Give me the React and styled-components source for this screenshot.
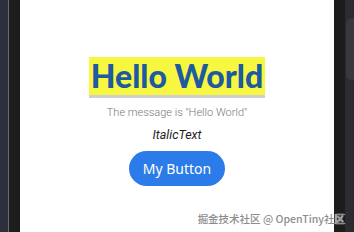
import styled, { createGlobalStyle } from "styled-components";

const GlobalStyle = createGlobalStyle`
  html, body {
    margin: 0;
    padding: 0;
    width: 100%;
    height: 100%;
    overflow: hidden;
    background: #1c1d1c;
  }
  #root {
    height: 100%;
  }
`;

const Device = styled.div`
  position: relative;
  display: flex;
  width: 354px;
  height: 232px;
  font-family: Roboto, "Noto Sans", sans-serif;
`;

const LeftBezel = styled.div`
  display: flex;
  width: 20px;
  flex-shrink: 0;

  &::before {
    content: "";
    width: 8px;
    background: #2e2f3d;
    border-right: 1px solid #6b6b72;
  }
  &::after {
    content: "";
    flex: 1;
    background: #1c1d1c;
  }
`;

const RightBezel = styled.div`
  position: relative;
  display: flex;
  width: 20px;
  flex-shrink: 0;

  &::before {
    content: "";
    width: 11px;
    background: #1c1c1c;
  }
  &::after {
    content: "";
    flex: 1;
    background: #2b2c32;
  }
`;

const SideKey = styled.span`
  position: absolute;
  right: 0;
  top: 18px;
  width: 8px;
  height: 62px;
  border-radius: 6px 0 0 6px;
  background: #383940;
  z-index: 1;
`;

const Screen = styled.main`
  flex: 1;
  background: #ffffff;
  display: flex;
  flex-direction: column;
  align-items: center;
  padding-top: 57px;
  box-sizing: border-box;
`;

const Title = styled.h1`
  margin: 0;
  padding: 0 2px;
  height: 38px;
  line-height: 38px;
  font-family: Lato, "Open Sans", sans-serif;
  font-weight: 900;
  font-size: 32px;
  color: #1d5a9f;
  background: #f7f742;
  box-shadow: 0 3px 0 #cfcfcf;
`;

const Message = styled.p`
  margin: 11px 0 0;
  font-size: 11px;
  line-height: 14px;
  font-weight: 300;
  color: #787878;
`;

const Italic = styled.p`
  margin: 7px 0 0;
  font-size: 12.5px;
  line-height: 16px;
  font-style: italic;
  color: #1e1e1e;
`;

const Button = styled.button`
  margin-top: 8px;
  height: 35px;
  width: 96px;
  padding: 0;
  border: none;
  border-radius: 18px;
  background: #2b7be8;
  color: #ffffff;
  font-family: "Noto Sans", Lato, sans-serif;
  font-size: 14px;
  cursor: pointer;
`;

const Watermark = styled.span`
  position: absolute;
  right: 9px;
  bottom: 6px;
  font-family: "Noto Sans CJK SC", sans-serif;
  font-size: 10.5px;
  font-weight: 500;
  line-height: 14px;
  color: #8c8c8c;
  text-shadow: 0 0 1px #ffffff, 0 0 1px #ffffff;
  z-index: 2;
`;

export default function App() {
  return (
    <>
      <GlobalStyle />
      <Device>
        <LeftBezel />
        <Screen>
          <Title>Hello World</Title>
          <Message>The message is "Hello World"</Message>
          <Italic>ItalicText</Italic>
          <Button>My Button</Button>
        </Screen>
        <RightBezel>
          <SideKey />
        </RightBezel>
        <Watermark>掘金技术社区 @ OpenTiny社区</Watermark>
      </Device>
    </>
  );
}
